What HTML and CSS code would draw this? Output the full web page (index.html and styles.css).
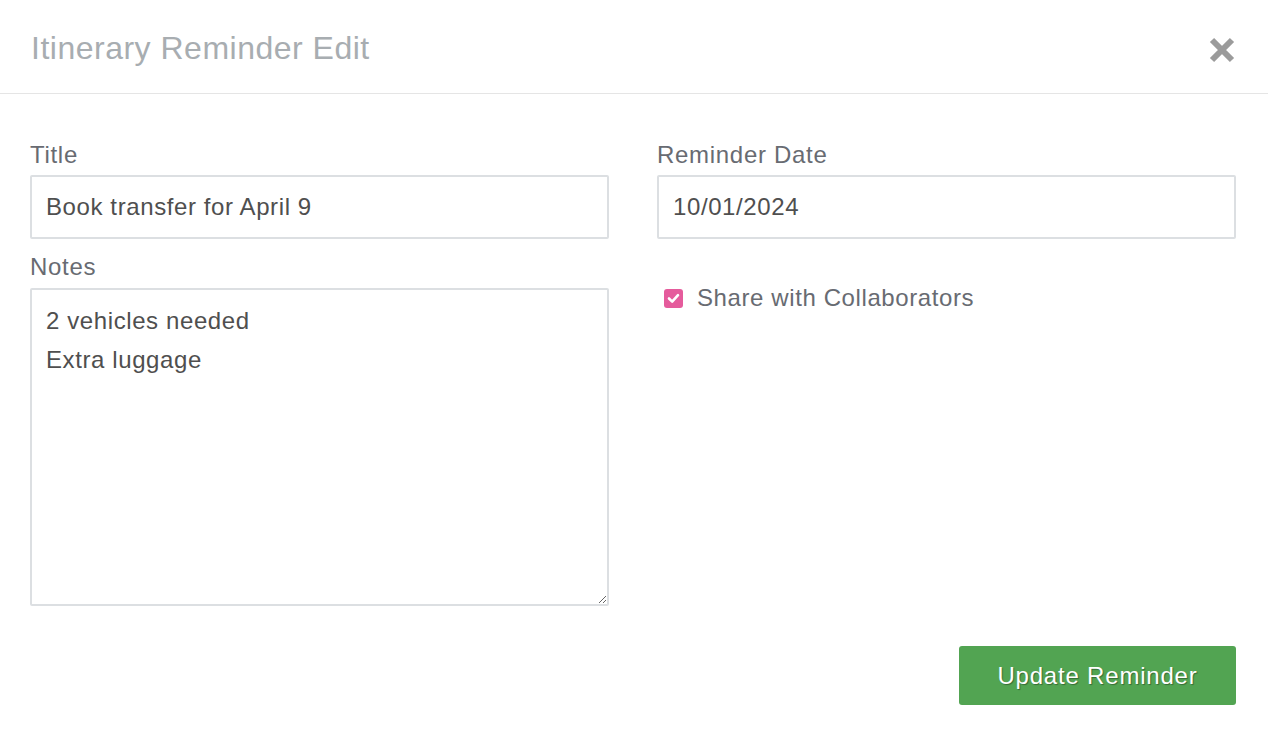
FILE: index.html
```html
<!DOCTYPE html>
<html>
<head>
<meta charset="utf-8">
<link rel="stylesheet" href="styles.css">
</head>
<body>
<div class="modal">
  <div class="modal-header">
    <h1 class="modal-title">Itinerary Reminder Edit</h1>
    <button class="close" aria-label="Close">
      <svg width="28" height="28" viewBox="0 0 28 28"><path d="M4 4 L24 24 M24 4 L4 24" stroke="#9b9b9b" stroke-width="6" stroke-linecap="butt"/></svg>
    </button>
  </div>
  <div class="modal-body">
    <div class="col">
      <label class="label">Title</label>
      <input class="field" type="text" value="Book transfer for April 9">
      <label class="label label-notes">Notes</label>
      <textarea class="field area">2 vehicles needed
Extra luggage</textarea>
    </div>
    <div class="col">
      <label class="label">Reminder Date</label>
      <input class="field" type="text" value="10/01/2024">
      <label class="check-row">
        <input class="check" type="checkbox" checked>
        <span>Share with Collaborators</span>
      </label>
    </div>
  </div>
  <div class="modal-footer">
    <button class="btn">Update Reminder</button>
  </div>
</div>
</body>
</html>
```
FILE: styles.css
```css
html, body {
  margin: 0;
  padding: 0;
  background: #ffffff;
}
body {
  font-family: "Liberation Sans", Arial, Helvetica, sans-serif;
  width: 1268px;
  height: 734px;
  overflow: hidden;
}
.modal {
  display: flex;
  flex-direction: column;
}
.modal-header {
  height: 94px;
  box-sizing: border-box;
  border-bottom: 1px solid #e5e5e5;
  display: flex;
  align-items: center;
  justify-content: space-between;
  padding: 4px 32px 0 31px;
}
.modal-title {
  margin: 0;
  font-weight: normal;
  font-size: 32px;
  letter-spacing: 0.5px;
  color: #a8adb1;
}
.close {
  border: 0;
  background: none;
  padding: 0;
  width: 28px;
  height: 28px;
  display: flex;
  margin-top: 2px;
}
.modal-body {
  display: grid;
  grid-template-columns: 579px 579px;
  column-gap: 48px;
  padding: 46px 32px 0 30px;
}
.col {
  display: flex;
  flex-direction: column;
  align-items: stretch;
}
.label {
  font-size: 24px;
  letter-spacing: 0.7px;
  line-height: 30px;
  color: #686b72;
  margin-bottom: 5px;
}
.label-notes {
  margin-top: 13px;
  margin-bottom: 6px;
}
.field {
  box-sizing: border-box;
  height: 64px;
  border: 2px solid #dcdfe2;
  border-radius: 2px;
  padding: 0 14px;
  font-family: "Liberation Sans", Arial, sans-serif;
  font-size: 24px;
  letter-spacing: 0.6px;
  color: #4f4f4f;
  outline: none;
  margin: 0;
}
.area {
  height: 318px;
  padding: 11px 14px;
  line-height: 39px;
  resize: vertical;
}
.check-row {
  display: flex;
  align-items: center;
  margin-top: 44px;
  margin-left: 7px;
  font-size: 24px;
  letter-spacing: 0.6px;
  color: #686b72;
  line-height: 30px;
}
.check {
  appearance: none;
  -webkit-appearance: none;
  width: 19px;
  height: 19px;
  margin: 0 14px 0 0;
  border-radius: 3px;
  background: #e55b9c url("data:image/svg+xml;utf8,<svg xmlns='http://www.w3.org/2000/svg' viewBox='0 0 19 19'><path d='M5 9.5 L8.2 12.6 L14 6.2' fill='none' stroke='white' stroke-width='2.6' stroke-linecap='round' stroke-linejoin='round'/></svg>") center/19px 19px no-repeat;
}
.modal-footer {
  display: flex;
  justify-content: flex-end;
  padding: 40px 32px 0 30px;
}
.btn {
  width: 277px;
  height: 59px;
  border: 0;
  border-radius: 3px;
  background: #52a452;
  color: #ffffff;
  font-family: "Liberation Sans", Arial, sans-serif;
  font-size: 24px;
  letter-spacing: 0.8px;
  text-shadow: 1px 1px 1px rgba(0,0,0,0.35);
  padding: 0;
}
```
